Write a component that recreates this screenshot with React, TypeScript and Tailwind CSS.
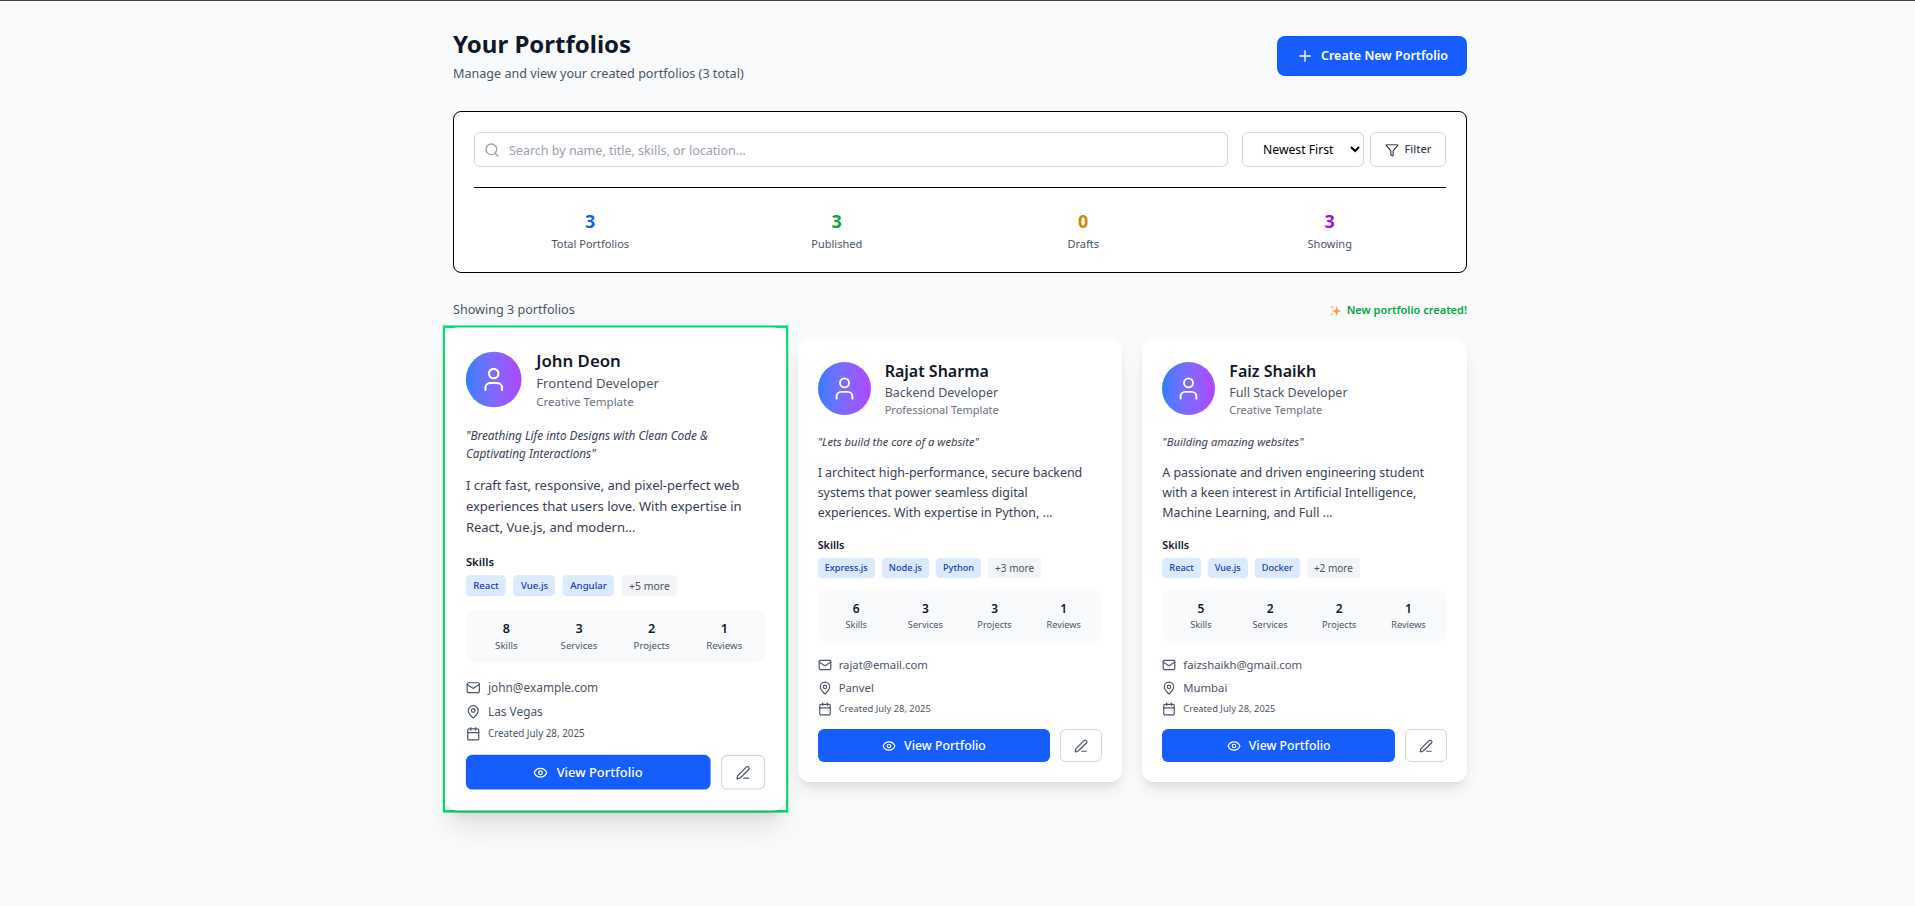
import React from 'react';
import { Calendar, Eye, Filter, Mail, MapPin, PenLine, Plus, Search, User } from 'lucide-react';

interface Portfolio {
  name: string;
  role: string;
  template: string;
  tagline: string;
  bio: string;
  skills: string[];
  more: string;
  counts: number[];
  email: string;
  location: string;
}

const portfolios: Portfolio[] = [
  {
    name: 'John Deon',
    role: 'Frontend Developer',
    template: 'Creative Template',
    tagline: '"Breathing Life into Designs with Clean Code & Captivating Interactions"',
    bio: 'I craft fast, responsive, and pixel-perfect web experiences that users love. With expertise in React, Vue.js, and modern...',
    skills: ['React', 'Vue.js', 'Angular'],
    more: '+5 more',
    counts: [8, 3, 2, 1],
    email: 'john@example.com',
    location: 'Las Vegas',
  },
  {
    name: 'Rajat Sharma',
    role: 'Backend Developer',
    template: 'Professional Template',
    tagline: '"Lets build the core of a website"',
    bio: 'I architect high-performance, secure backend systems that power seamless digital experiences. With expertise in Python, ...',
    skills: ['Express.js', 'Node.js', 'Python'],
    more: '+3 more',
    counts: [6, 3, 3, 1],
    email: 'rajat@email.com',
    location: 'Panvel',
  },
  {
    name: 'Faiz Shaikh',
    role: 'Full Stack Developer',
    template: 'Creative Template',
    tagline: '"Building amazing websites"',
    bio: 'A passionate and driven engineering student with a keen interest in Artificial Intelligence, Machine Learning, and Full ...',
    skills: ['React', 'Vue.js', 'Docker'],
    more: '+2 more',
    counts: [5, 2, 2, 1],
    email: 'faizshaikh@gmail.com',
    location: 'Mumbai',
  },
];

const countLabels = ['Skills', 'Services', 'Projects', 'Reviews'];

const summary = [
  { value: 3, label: 'Total Portfolios', color: 'text-[#155dfc]' },
  { value: 3, label: 'Published', color: 'text-[#00a63e]' },
  { value: 0, label: 'Drafts', color: 'text-[#d08700]' },
  { value: 3, label: 'Showing', color: 'text-[#9810fa]' },
];

function PortfolioCard({ item, highlight }: { item: Portfolio; highlight?: boolean }) {
  return (
    <div className={highlight ? 'scale-105 ring-2 ring-green-400' : ''}>
      <div className={`bg-white rounded-xl px-5 pb-5 pt-[21px] ${highlight ? 'shadow-xl' : 'shadow-lg'}`}>
        {/* Header */}
        <div className="flex items-center gap-[14px]">
          <div className="w-[53px] h-[53px] rounded-full bg-gradient-to-r from-[#2b7fff] to-[#ad46ff] flex items-center justify-center shrink-0">
            <User className="w-[27px] h-[27px] text-white" strokeWidth={1.75} />
          </div>
          <div>
            <h3 className="text-[16px] leading-[22px] font-semibold text-[#101828]">{item.name}</h3>
            <p className="mt-[1px] text-[12.5px] leading-[20px] text-[#4a5565]">{item.role}</p>
            <p className="text-[11px] leading-[14px] text-[#6a7282]">{item.template}</p>
          </div>
        </div>

        <p className="mt-[16px] text-[11.2px] leading-[17px] italic text-[#364153]">{item.tagline}</p>
        <p className="mt-[13px] text-[12.4px] leading-[20px] text-[#364153]">{item.bio}</p>

        {/* Skills */}
        <h4 className="mt-[13px] text-[10.8px] leading-[18px] font-semibold text-[#101828]">Skills</h4>
        <div className="mt-[4px] flex gap-[7px]">
          {item.skills.map((skill) => (
            <span key={skill} className="px-[7px] h-[20px] flex items-center bg-[#dbeafe] text-[#193cb8] text-[9.2px] font-medium rounded">
              {skill}
            </span>
          ))}
          <span className="px-[7px] h-[20px] flex items-center bg-[#f3f4f6] text-[#4a5565] text-[10px] rounded">{item.more}</span>
        </div>

        {/* Counts */}
        <div className="mt-[13px] h-[50px] bg-[#f9fafb] rounded-lg grid grid-cols-4 items-center px-1">
          {item.counts.map((count, index) => (
            <div key={countLabels[index]} className="text-center">
              <div className="text-[12px] leading-[18px] font-semibold text-[#101828]">{count}</div>
              <div className="text-[9.2px] leading-[14px] text-[#4a5565]">{countLabels[index]}</div>
            </div>
          ))}
        </div>

        {/* Contact */}
        <div className="mt-[14px] flex items-center gap-[7px] h-[20px] text-[11.3px] text-[#4a5565]">
          <Mail className="w-[14px] h-[14px] text-[#4a5565]" />
          <span>{item.email}</span>
        </div>
        <div className="mt-[3px] flex items-center gap-[7px] h-[20px] text-[11.3px] text-[#4a5565]">
          <MapPin className="w-[14px] h-[14px] text-[#4a5565]" />
          <span>{item.location}</span>
        </div>
        <div className="mt-[1px] flex items-center gap-[7px] h-[20px] text-[9.4px] text-[#4a5565]">
          <Calendar className="w-[14px] h-[14px] text-[#4a5565]" />
          <span>Created July 28, 2025</span>
        </div>

        {/* Actions */}
        <div className="mt-[10px] flex gap-[10px]">
          <button className="flex-1 h-[33px] pt-[1px] bg-[#155dfc] text-white text-[12.3px] font-medium rounded-md flex items-center justify-center gap-2">
            <Eye className="w-[14px] h-[14px]" />
            View Portfolio
          </button>
          <button className="w-[42px] h-[33px] bg-white border border-[#d1d5dc] rounded-md flex items-center justify-center">
            <PenLine className="w-[14px] h-[14px] text-[#4a5565]" />
          </button>
        </div>
      </div>
    </div>
  );
}

export default function App() {
  return (
    <div className="min-h-[906px] pl-[5px] bg-[#f9fafb] border-t border-[#404040] font-['Noto_Sans',sans-serif]">
      <div className="w-[1014px] mx-auto pt-[27px]">
        {/* Title row */}
        <div className="flex items-start justify-between">
          <div>
            <h1 className="text-[24px] leading-[32px] font-bold text-[#101828]">Your Portfolios</h1>
            <p className="mt-[4px] text-[12.6px] leading-[20px] text-[#4a5565]">Manage and view your created portfolios (3 total)</p>
          </div>
          <button className="mt-[8px] w-[190px] h-[40px] bg-[#155dfc] text-white text-[12.5px] font-semibold rounded-lg flex items-center justify-center gap-[7px]">
            <Plus className="w-[18px] h-[18px]" strokeWidth={1.75} />
            Create New Portfolio
          </button>
        </div>

        {/* Search panel */}
        <div className="mt-[27px] bg-white border border-black rounded-lg p-5">
          <div className="flex items-center">
            <div className="relative flex-1">
              <Search className="absolute left-[10px] top-[10px] w-4 h-4 text-[#99a1af]" />
              <input
                className="w-full h-[35px] pl-[34px] pr-3 pt-[1px] border border-[#d1d5dc] rounded-md text-[12.5px] outline-none placeholder:text-[#99a1af]"
                placeholder="Search by name, title, skills, or location..."
              />
            </div>
            <select className="ml-[14px] w-[122px] h-[35px] pl-[16px] bg-white border border-[#d1d5dc] rounded-md text-[12.2px] text-black">
              <option>Newest First</option>
            </select>
            <button className="ml-[6px] w-[76px] h-[35px] bg-white border border-[#d1d5dc] rounded-md flex items-center justify-center gap-[6px] text-[11px] font-medium text-[#364153]">
              <Filter className="w-[14px] h-[14px]" />
              Filter
            </button>
          </div>
          <div className="mt-[20px] border-t border-black pt-[22px] grid grid-cols-4 gap-[14px]">
            {summary.map((stat) => (
              <div key={stat.label} className="text-center">
                <div className={`text-[18px] leading-[22px] font-bold ${stat.color}`}>{stat.value}</div>
                <div className="mt-[4px] text-[11px] leading-[16px] text-[#4a5565]">{stat.label}</div>
              </div>
            ))}
          </div>
        </div>

        {/* Result bar */}
        <div className="mt-[27px] flex items-center justify-between h-[20px]">
          <span className="text-[12.6px] text-[#4a5565]">Showing 3 portfolios</span>
          <span className="text-[11px] font-semibold text-[#00a63e] flex items-center gap-[5px]">
            <svg viewBox="0 0 16 16" className="w-[13px] h-[13px]">
              <path d="M9.5 2 L11 7 L15 8.5 L11 10 L9.5 15 L8 10 L3 8.5 L8 7 Z" fill="#f9a43a" />
              <path d="M4 1 L4.7 3.3 L7 4 L4.7 4.7 L4 7 L3.3 4.7 L1 4 L3.3 3.3 Z" fill="#fbc47a" />
              <path d="M3.5 10 L4 12 L6 12.5 L4 13 L3.5 15 L3 13 L1 12.5 L3 12 Z" fill="#fbc47a" />
            </svg>
            New portfolio created!
          </span>
        </div>

        {/* Cards */}
        <div className="mt-[19px] grid grid-cols-3 gap-5 items-start">
          {portfolios.map((item, index) => (
            <PortfolioCard key={item.name} item={item} highlight={index === 0} />
          ))}
        </div>
      </div>
    </div>
  );
}
